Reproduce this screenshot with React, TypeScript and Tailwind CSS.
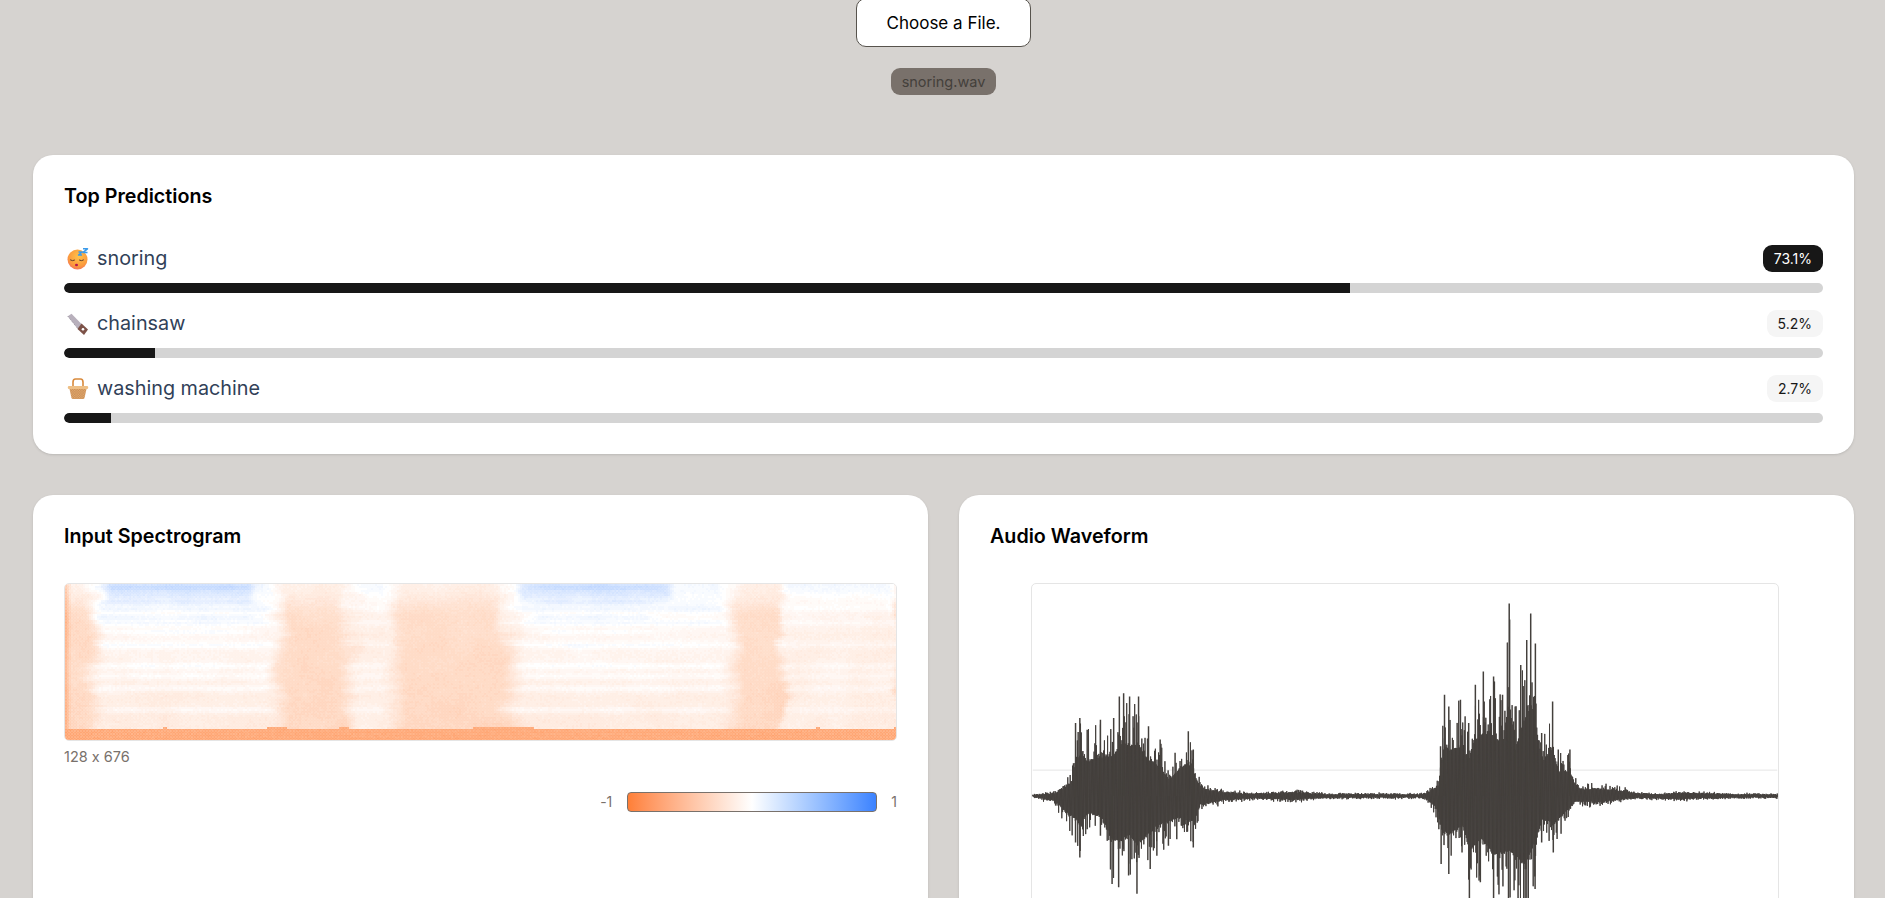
const font = "font-['Inter',sans-serif] [font-feature-settings:'calt'_0]";

// -- seeded noise so both charts draw the same every time
function makeRand(seed: number) {
  let s = seed;
  return () => {
    s = (s + 0x6d2b79f5) | 0;
    let t = Math.imul(s ^ (s >>> 15), 1 | s);
    t = (t + Math.imul(t ^ (t >>> 7), 61 | t)) ^ t;
    return ((t ^ (t >>> 14)) >>> 0) / 4294967296;
  };
}

function lerp(points: number[][], x: number) {
  for (let i = 1; i < points.length; i++) {
    if (x <= points[i][0]) {
      const [x0, y0] = points[i - 1];
      const [x1, y1] = points[i];
      return y0 + ((y1 - y0) * (x - x0)) / (x1 - x0 || 1);
    }
  }
  return points[points.length - 1][1];
}

// -- spectrogram
const SPEC_W = 832;
const SPEC_H = 157;

function smooth(a: number, b: number, x: number) {
  const t = Math.min(1, Math.max(0, (x - a) / (b - a)));
  return t * t * (3 - 2 * t);
}

function band(x: number, a: number, b: number, edge = 8) {
  return smooth(a - edge, a + edge, x) * (1 - smooth(b - edge, b + edge, x));
}

// coarse blotches so the heat map isn't too clean
const blotchRand = makeRand(5);
const blotches: number[][] = Array.from({ length: 12 }, () =>
  Array.from({ length: 44 }, () => blotchRand()),
);

function blotch(u: number, v: number) {
  const gx = (u / SPEC_W) * 42;
  const gy = (v / SPEC_H) * 10;
  const x0 = Math.floor(gx);
  const y0 = Math.floor(gy);
  const fx = gx - x0;
  const fy = gy - y0;
  const top = blotches[y0][x0] * (1 - fx) + blotches[y0][x0 + 1] * fx;
  const bot = blotches[y0 + 1][x0] * (1 - fx) + blotches[y0 + 1][x0 + 1] * fx;
  return top * (1 - fy) + bot * fy;
}

function specValue(u: number, v: number, noise: number, rowNoise: number) {
  const b = blotch(u, v);
  if (v >= 144 + Math.round(b * 2)) return -0.72 + noise * 0.05;
  const f = v / 143;
  // segments wander a little per row, like the real recording
  const w = u + (rowNoise - 0.5) * 14 + (b - 0.5) * 16;
  const loud = Math.max(band(w, 28, 212, 12), band(w, 444, 668, 14));
  const pale = Math.max(band(w, 284, 328, 12), band(w, 716, 832, 6));
  const topFade = 1 - smooth(0, 34, v);
  let val = -0.27 - f * 0.05 + topFade * 0.14;
  val += pale * (0.15 + 0.05 * rowNoise);
  val += loud * (0.25 + 0.05 * rowNoise - f * 0.12 - topFade * 0.1);
  const stripe = [24, 38, 60, 82, 92, 104, 126].reduce(
    (acc, c) => acc + Math.exp(-((v - c) * (v - c)) / 10),
    0,
  );
  val += stripe * (loud * 0.08 + pale * 0.05);
  const blueTop =
    (band(u, 40, 186, 6) + band(u, 454, 606, 6)) * (1 - smooth(8, 22, v));
  const blueMid =
    (band(u, 24, 190, 14) + band(u, 470, 590, 14)) *
    (1 - smooth(26, 84, v)) *
    Math.max(0, Math.sin(v * 0.42 + 0.5));
  val += blueTop * 0.17 + blueMid * 0.09;
  if (u < 5) val -= 0.3 * (1 - u / 5);
  return val + (noise - 0.5) * 0.04 + (b - 0.5) * 0.06;
}

function specColor(val: number) {
  const a = Math.min(1, Math.abs(val));
  const to = val < 0 ? [255, 127, 54] : [59, 130, 255];
  const c = to.map((ch) => Math.round(255 + (ch - 255) * a));
  return `rgb(${c[0]},${c[1]},${c[2]})`;
}

function buildSpectrogram() {
  const rand = makeRand(71);
  const buckets = new Map<string, string[]>();
  const raw: number[] = [];
  for (let r = 0; r < 84; r++) raw.push(rand());
  // average neighbours so the row wobble stays soft
  const rows = raw.map((n, i) => (n + raw[Math.max(0, i - 1)] + raw[Math.min(83, i + 1)]) / 3);
  for (let x = 0; x < SPEC_W; x += 2) {
    for (let r = 0; r < 80; r++) {
      const y = r * 2;
      const q = Math.round(specValue(x, y, rand(), rows[r]) * 30) / 30;
      const key = specColor(q);
      if (!buckets.has(key)) buckets.set(key, []);
      buckets.get(key)!.push(`M${x} ${y}h2v2h-2z`);
    }
  }
  return Array.from(buckets.entries()).map(([fill, d]) => ({
    fill,
    d: d.join(""),
  }));
}

const specLayers = buildSpectrogram();

function Spectrogram() {
  return (
    <svg
      viewBox={`0 0 ${SPEC_W} ${SPEC_H}`}
      className="block w-full h-full"
      preserveAspectRatio="none"
      shapeRendering="crispEdges"
    >
      <defs>
        <pattern id="weave" width="3" height="3" patternUnits="userSpaceOnUse">
          <rect x="0" y="0" width="1.5" height="1.5" fill="#fff" opacity="0.14" />
          <rect x="1.5" y="1.5" width="1.5" height="1.5" fill="#fff" opacity="0.14" />
        </pattern>
      </defs>
      {specLayers.map((l) => (
        <path key={l.fill} d={l.d} fill={l.fill} />
      ))}
      <rect width={SPEC_W} height={SPEC_H} fill="url(#weave)" />
    </svg>
  );
}

// -- waveform, envelope read off the recording (x/height in 3x px)
const WAVE_W = 748;
const WAVE_H = 426;
const MID = 213;

const upA = [[38,4],[100,12],[130,40],[155,90],[165,220],[178,235],[200,200],[240,230],[280,235],[297,300],[310,310],[328,300],[355,300],[385,210],[420,170],[445,90],[465,130],[505,195],[520,140],[535,70],[555,40],[580,25],[640,15],[700,10],[830,18],[900,8],[1200,6],[1215,8]];
const lowA = [[38,4],[100,25],[135,90],[165,140],[178,185],[200,100],[240,120],[275,265],[295,275],[325,240],[350,295],[390,220],[410,180],[445,150],[470,130],[520,155],[540,50],[600,25],[700,10],[830,20],[900,8],[1200,6],[1215,8]];
const upB = [[75,8],[100,30],[118,60],[125,150],[137,305],[150,270],[185,290],[210,220],[230,335],[254,375],[285,360],[312,305],[332,580],[350,270],[367,395],[385,470],[397,550],[411,460],[430,190],[463,285],[480,140],[515,140],[530,70],[550,35],[600,40],[680,25],[720,10],[800,6],[850,15],[900,12],[960,8],[1138,5]];
const lowB = [[75,8],[100,40],[120,100],[127,205],[150,235],[190,170],[212,340],[245,260],[285,360],[330,340],[380,420],[410,280],[430,140],[465,170],[510,80],[530,30],[600,35],[680,15],[720,8],[850,15],[960,8],[1138,5]];

function toLocal(points: number[][], origin: number) {
  return points.map(([x, h]) => [origin + x / 3 - 1032, h / 3]);
}

const upEnv = [...toLocal(upA, 1020), ...toLocal(upB, 1400)];
const lowEnv = [...toLocal(lowA, 1020), ...toLocal(lowB, 1400)];

function buildWave() {
  const rand = makeRand(13);
  let d = `M0 ${MID}`;
  for (let x = 0; x <= WAVE_W; x += 0.8) {
    const up = lerp(upEnv, x);
    const low = lerp(lowEnv, x);
    const a = up * (0.5 + 0.5 * Math.pow(rand(), 4)) + rand() * 1.5;
    const b = low * (0.48 + 0.52 * Math.pow(rand(), 4)) + rand() * 1.5;
    d += `L${x} ${(MID - a).toFixed(1)}L${x + 0.4} ${(MID + b).toFixed(1)}`;
  }
  return d;
}

const wavePath = buildWave();

const peakLines = [...upEnv.map(([x, h]) => [x, -h]), ...lowEnv.map(([x, h]) => [x, h])]
  .filter(([, h]) => Math.abs(h) > 30)
  .map(([x, h]) => `M${x.toFixed(1)} ${MID}V${MID + h}`)
  .join("");

function Waveform() {
  return (
    <svg viewBox={`0 0 ${WAVE_W} ${WAVE_H}`} className="block w-full h-full">
      <line x1="0" x2={WAVE_W} y1="187" y2="187" stroke="#e5e5e5" strokeWidth="1" />
      <path d={wavePath} fill="none" stroke="#44403c" strokeWidth="1" strokeLinejoin="round" />
      <path d={peakLines} fill="none" stroke="#44403c" strokeWidth="1.5" />
    </svg>
  );
}

// -- emoji
function SleepingFace() {
  return (
    <svg viewBox="0 0 22 22" className="w-[22px] h-[22px]">
      <defs>
        <radialGradient id="face" cx="0.55" cy="0.35" r="0.75">
          <stop offset="0" stopColor="#ffc24a" />
          <stop offset="0.65" stopColor="#fb9a3c" />
          <stop offset="1" stopColor="#f0636a" />
        </radialGradient>
      </defs>
      <circle cx="10.5" cy="11.5" r="10" fill="url(#face)" />
      <path d="M3.5 12q2 1.4 4 .2M12.5 12.2q2 1.2 4-.2" fill="none" stroke="#5b3a2a" strokeWidth="1" strokeLinecap="round" />
      <ellipse cx="9.5" cy="17" rx="1.5" ry="1.2" fill="#b5164f" />
      <path d="M11.5 4h3.5l-3.5 3h3.5M16 .8h4.5L16 4.4h4.5" fill="none" stroke="#3b9bea" strokeWidth="1.5" strokeLinejoin="round" />
    </svg>
  );
}

function HandSaw() {
  return (
    <svg viewBox="0 0 22 22" className="w-[22px] h-[22px]">
      <path d="M.8 3.2 4.5 .8 16 12.5 11.5 16.5z" fill="#b8b0bc" />
      <path d="M.8 3.2 11.5 16.5" fill="none" stroke="#938b98" strokeWidth="0.9" strokeDasharray="1 1" />
      <path d="M14.5 10.5 21 16.5 17 22 10.5 16z" fill="#7c5248" />
      <circle cx="16" cy="16.2" r="1.3" fill="#fff" />
    </svg>
  );
}

function Basket() {
  return (
    <svg viewBox="0 0 22 22" className="w-[22px] h-[22px]">
      <defs>
        <pattern id="wicker" width="2.4" height="2.4" patternUnits="userSpaceOnUse">
          <rect width="2.4" height="2.4" fill="#c98a50" />
          <rect width="1.2" height="1.2" fill="#e2ad74" />
          <rect x="1.2" y="1.2" width="1.2" height="1.2" fill="#e2ad74" />
        </pattern>
      </defs>
      <path d="M6 9V4Q6 1 8.5 1h5Q16 1 16 4V9" fill="none" stroke="#d98a3c" strokeWidth="1.6" />
      <path d="M2.5 11h17l-2 9q-.3 1-1.4 1H5.9q-1.1 0-1.4-1z" fill="url(#wicker)" />
      <rect x="0.8" y="8" width="20.4" height="3" rx="1.2" fill="#eebf85" />
    </svg>
  );
}

const predictions = [
  { icon: <SleepingFace />, label: "snoring", pct: 73.1, top: true },
  { icon: <HandSaw />, label: "chainsaw", pct: 5.2, top: false },
  { icon: <Basket />, label: "washing machine", pct: 2.7, top: false },
];

function Card({ title, children }: { title: string; children: React.ReactNode }) {
  return (
    <div className="bg-white rounded-[20px] px-[31px] pt-[28px] pb-[31px] shadow-sm">
      <h2 className="text-[19.7px] leading-[27px] font-semibold text-black">{title}</h2>
      {children}
    </div>
  );
}

export default function App() {
  return (
    <div className={`h-screen overflow-hidden bg-[#d6d3d0] pl-[33px] pr-[31px] ${font}`}>
      <div className="flex flex-col items-center -mt-[2px]">
        <button className="w-[175px] h-[49px] pt-[3px] bg-white border border-stone-600 rounded-[10px] text-[17px] text-black">
          Choose a File.
        </button>
        <span className="mt-[21px] h-[27px] w-[105px] flex items-center justify-center rounded-[9px] bg-stone-500 text-[14.5px] text-stone-700">
          snoring.wav
        </span>
      </div>

      <div className="mt-[60px]">
        <Card title="Top Predictions">
          <div className="mt-[35px] flex flex-col gap-[17px]">
            {predictions.map((p) => (
              <div key={p.label}>
                <div className="flex items-center justify-between h-[27px]">
                  <div className="flex items-center">
                    <span className="w-[33px] pl-[3px]">{p.icon}</span>
                    <span className="text-[19.8px] text-slate-700">{p.label}</span>
                  </div>
                  <span
                    className={`h-[27px] flex items-center px-[11px] rounded-[9px] text-[14px] ${
                      p.top ? "bg-neutral-900 text-white" : "bg-neutral-100 text-neutral-900"
                    }`}
                  >
                    {p.pct}%
                  </span>
                </div>
                <div className="mt-[11px] h-[10px] rounded-full bg-neutral-300 overflow-hidden">
                  <div
                    className="h-full rounded-l-full bg-neutral-900"
                    style={{ width: `${p.pct}%` }}
                  />
                </div>
              </div>
            ))}
          </div>
        </Card>
      </div>

      <div className="mt-[41px] grid grid-cols-2 gap-[31px]">
        <Card title="Input Spectrogram">
          <div className="mt-[33px] h-[158px] rounded-[5px] border border-neutral-200 overflow-hidden">
            <Spectrogram />
          </div>
          <p className="mt-[5px] text-[14.5px] leading-[21px] text-stone-500">128 x 676</p>
          <div className="mt-[24px] flex items-center justify-end text-[14px] text-stone-500">
            <span>-1</span>
            <div className="ml-[15px] mr-[14px] h-[20px] w-[250px] rounded-[4px] border border-stone-500 bg-gradient-to-r from-[#ff7f36] via-white to-[#3b82ff]" />
            <span>1</span>
          </div>
          <div className="h-[200px]" />
        </Card>
        <Card title="Audio Waveform">
          <div className="mt-[33px] ml-[41px] w-[748px] h-[426px] rounded-[5px] border border-neutral-200 overflow-hidden">
            <Waveform />
          </div>
        </Card>
      </div>
    </div>
  );
}
